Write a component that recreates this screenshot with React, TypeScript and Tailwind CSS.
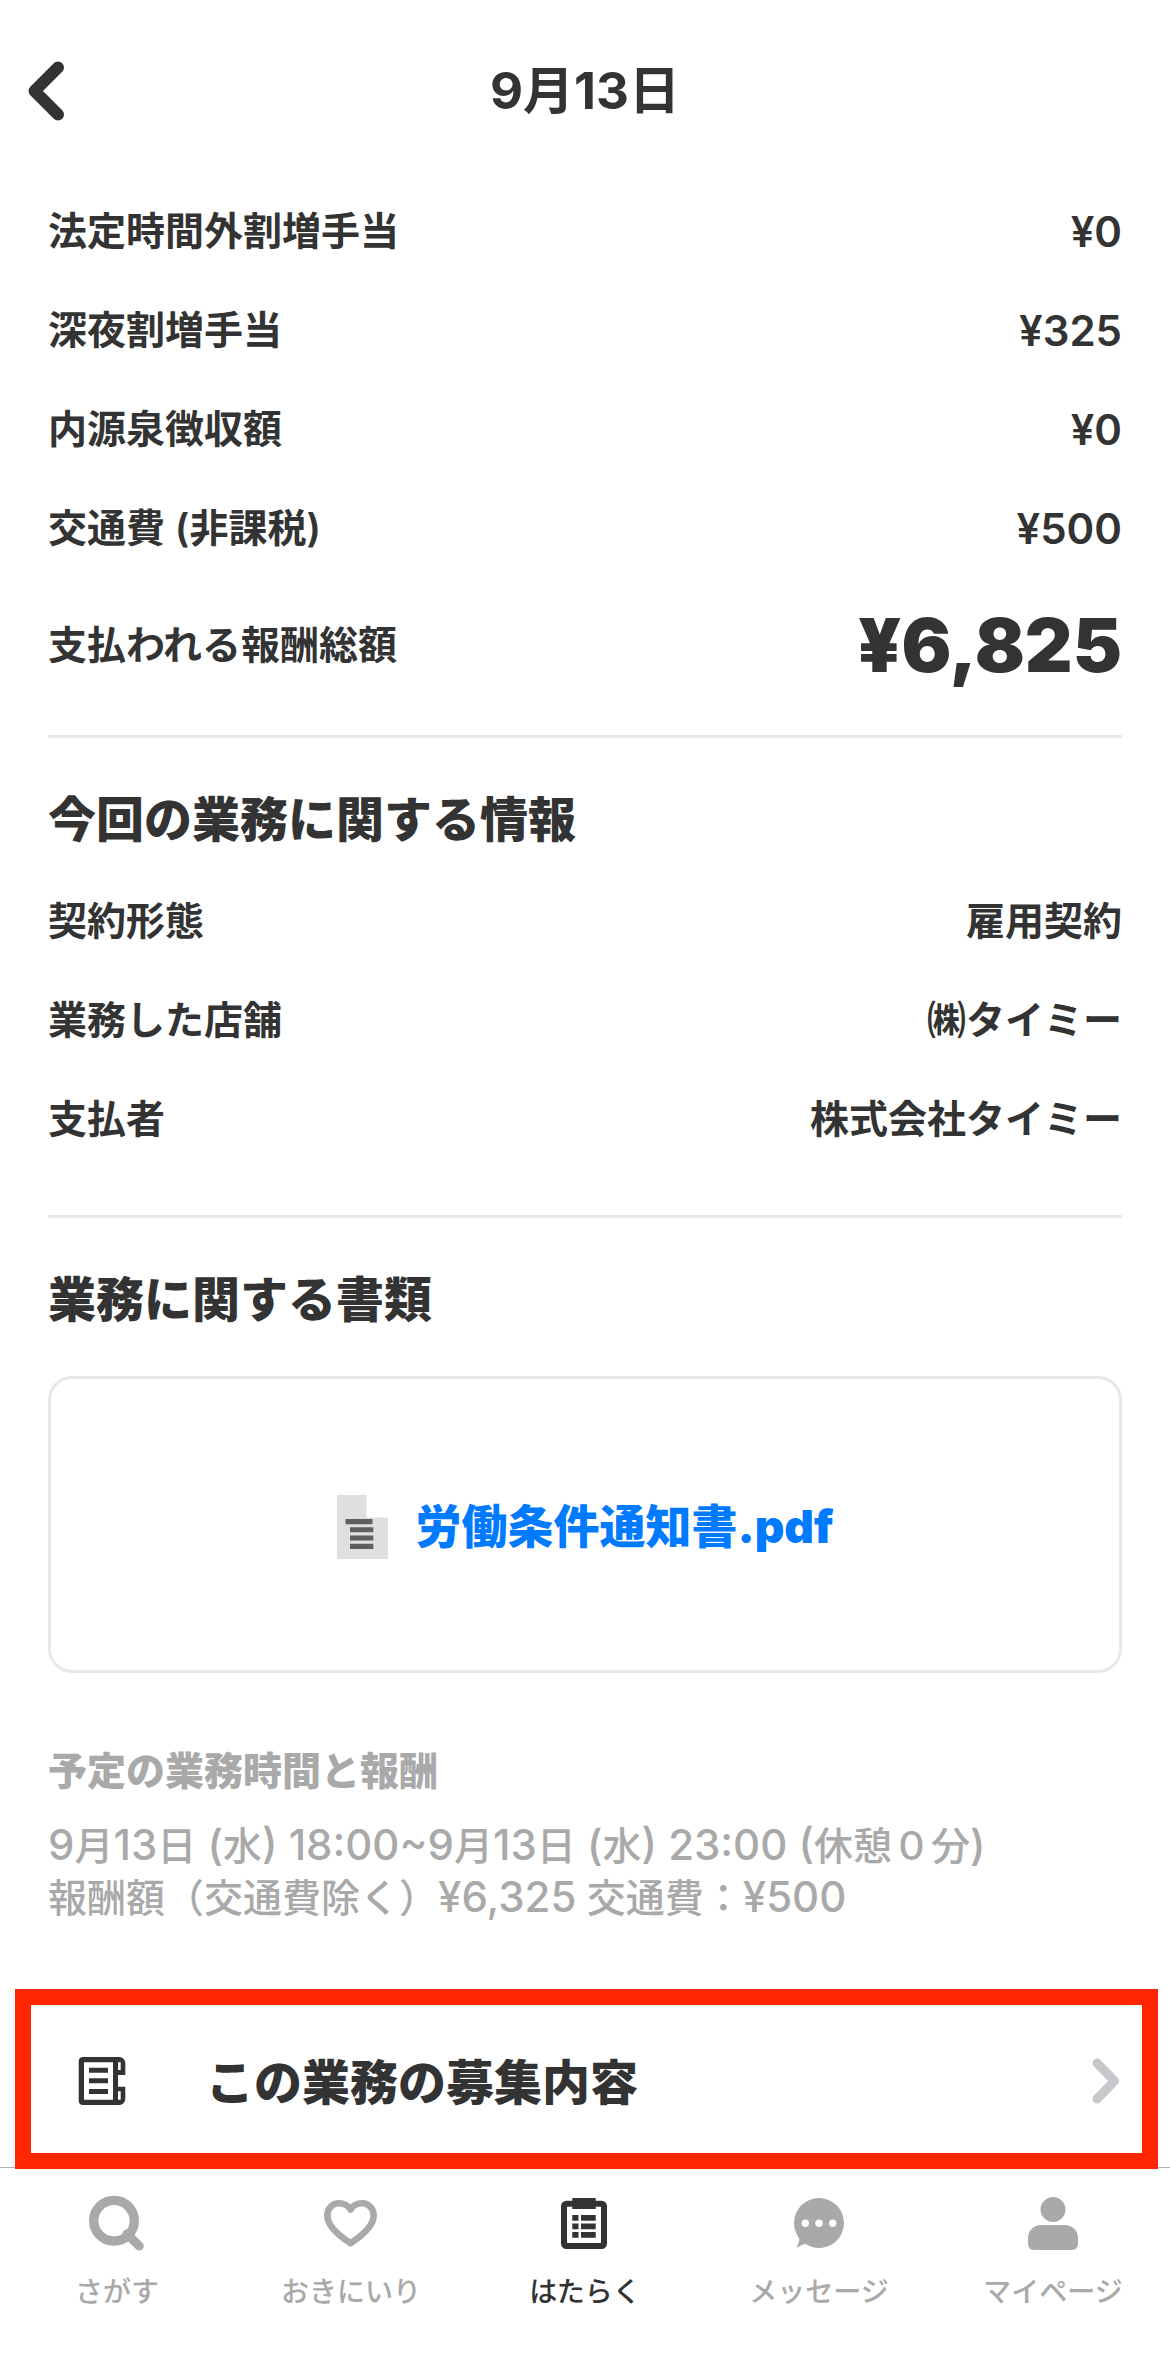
import React from 'react';

interface RowItem {
  label: string;
  value: string;
}

interface TabItem {
  id: string;
  label: string;
  icon: React.ReactNode;
  active?: boolean;
}

const payRows: RowItem[] = [
  { label: '法定時間外割増手当', value: '¥0' },
  { label: '深夜割増手当', value: '¥325' },
  { label: '内源泉徴収額', value: '¥0' },
  { label: '交通費 (非課税)', value: '¥500' },
];

const jobRows: RowItem[] = [
  { label: '契約形態', value: '雇用契約' },
  { label: '業務した店舗', value: '㈱タイミー' },
  { label: '支払者', value: '株式会社タイミー' },
];

const SearchIcon = () => (
  <svg viewBox="0 0 60 60" className="size-15" fill="none" stroke="currentColor" aria-hidden="true">
    <circle cx="27" cy="26.7" r="20.3" strokeWidth="9.4" />
    <path d="M40 40L52.3 52" strokeWidth="9" strokeLinecap="round" />
  </svg>
);

const HeartIcon = () => (
  <svg viewBox="0 0 60 60" className="size-15" fill="none" stroke="currentColor" aria-hidden="true">
    <path
      d="M29.5 49.2C20 43 6.3 33 6.3 21.5C6.3 14.5 11.5 9.3 18 9.3C23 9.3 27 11.5 29.5 15.5C32 11.5 36 9.3 41 9.3C47.5 9.3 52.7 14.5 52.7 21.5C52.7 33 39 43 29.5 49.2Z"
      strokeWidth="6.6"
      strokeLinejoin="round"
    />
  </svg>
);

const ClipboardIcon = () => (
  <svg viewBox="0 0 60 60" className="size-15" fill="currentColor" aria-hidden="true">
    <rect x="9" y="9.7" width="40" height="42.3" rx="2.5" fill="none" stroke="currentColor" strokeWidth="6" />
    <rect x="17.3" y="4" width="23.4" height="11" />
    <path d="M17.3 21h6.2v5.7h-6.2zM26 21h14.7v5.7H26zM17.3 29.5h6.2v5.7h-6.2zM26 29.5h14.7v5.7H26zM17.3 38h6.2v5.7h-6.2zM26 38h14.7v5.7H26z" />
  </svg>
);

const MessageIcon = () => (
  <svg viewBox="0 0 60 60" className="size-15" fill="currentColor" aria-hidden="true">
    <circle cx="30" cy="29" r="25" />
    <path d="M9 41C11.5 45.5 10 49 7.3 53.5L19 48.5Z" />
    <g fill="#fff">
      <circle cx="16.3" cy="29.2" r="3.7" />
      <circle cx="30" cy="29.2" r="3.7" />
      <circle cx="43.7" cy="29.2" r="3.7" />
    </g>
  </svg>
);

const PersonIcon = () => (
  <svg viewBox="0 0 60 60" className="size-15" fill="currentColor" aria-hidden="true">
    <circle cx="30" cy="15.5" r="12.5" />
    <path d="M18 31H42A13 13 0 0 1 55 44V50A6 6 0 0 1 49 56H11A6 6 0 0 1 5 50V44A13 13 0 0 1 18 31Z" />
  </svg>
);

const ReceiptIcon = () => (
  <svg viewBox="0 0 48 48" className="size-12" fill="currentColor" fillRule="evenodd" aria-hidden="true">
    <path d="M5 0H41A6 6 0 0 1 47.3 6V18H40V29.7H47.3V42A6 6 0 0 1 41 48H5A4.5 4.5 0 0 1 .7 43.5V4.5A4.5 4.5 0 0 1 5 0ZM6 5.3V42.7H35V5.3ZM40 5.3V13H42.7V5.3ZM40 34.3V42.7H42.7V34.3Z" />
    <path d="M11 10.7h19v5H11zM11 21.2h19v5H11zM11 32h19v5H11z" />
  </svg>
);

const FileIcon = () => (
  <svg viewBox="0 0 51 64" className="h-16 w-[51px]" aria-hidden="true">
    <path d="M1.5 0H29.5V22.5H49.5A1.5 1.5 0 0 1 51 24V62.5A1.5 1.5 0 0 1 49.5 64H1.5A1.5 1.5 0 0 1 0 62.5V1.5A1.5 1.5 0 0 1 1.5 0Z" fill="#dfdfdf" />
    <path d="M8.5 24h27v5.2h-27zM13 32.2h23.3v5H13zM13 40.5h23.3v5H13zM13 48.8h23.3v5.2H13z" fill="#5f5f5f" />
  </svg>
);

const tabs: TabItem[] = [
  { id: 'search', label: 'さがす', icon: <SearchIcon /> },
  { id: 'favorite', label: 'おきにいり', icon: <HeartIcon /> },
  { id: 'work', label: 'はたらく', icon: <ClipboardIcon />, active: true },
  { id: 'message', label: 'メッセージ', icon: <MessageIcon /> },
  { id: 'mypage', label: 'マイページ', icon: <PersonIcon /> },
];

// Latin digits run small next to kanji, so they are set one step larger
const Num: React.FC<{ children: React.ReactNode }> = ({ children }) => (
  <span className="text-[42px]">{children}</span>
);

const Row: React.FC<RowItem> = ({ label, value }) => (
  <div className="flex h-[99px] items-center justify-between text-[39px] font-semibold">
    <dt>{label}</dt>
    <dd>{value.startsWith('¥') ? <Num>{value}</Num> : value}</dd>
  </div>
);

const App: React.FC = () => {
  return (
    <div
      lang="ja"
      className="flex min-h-screen flex-col bg-white font-['Inter','Noto_Sans_CJK_JP',sans-serif] text-[#333]"
    >
      {/* Header */}
      <header className="grid h-[182px] grid-cols-[1fr_auto_1fr] items-center">
        <button type="button" aria-label="戻る" className="ml-7 justify-self-start">
          <svg viewBox="0 0 36 60" className="h-15 w-9" fill="none" stroke="currentColor" aria-hidden="true">
            <path d="M30 6.5L6.5 30L30 53.5" strokeWidth="12" strokeLinecap="round" strokeLinejoin="round" />
          </svg>
        </button>
        <h1 className="text-[51px] font-bold">9月13日</h1>
      </header>

      <main className="flex-1">
        <div className="px-12">
          {/* Payment */}
          <section className="border-b-3 border-[#e8e8e8] pb-[22px]">
            <dl>
              {payRows.map((row) => (
                <Row key={row.label} {...row} />
              ))}
              <div className="flex h-[135px] items-center justify-between text-[39px] font-semibold">
                <dt>支払われる報酬総額</dt>
                <dd className="text-[74px] font-black">¥6,825</dd>
              </div>
            </dl>
          </section>

          {/* Job info */}
          <section className="border-b-3 border-[#e8e8e8] py-[46px]">
            <h2 className="pb-4 text-[48px] leading-[72px] font-black">今回の業務に関する情報</h2>
            <dl>
              {jobRows.map((row) => (
                <Row key={row.label} {...row} />
              ))}
            </dl>
          </section>

          {/* Documents */}
          <section className="pt-[46px]">
            <h2 className="text-[48px] leading-[72px] font-black">業務に関する書類</h2>
            <a
              href="#document"
              className="mt-10 flex h-[297px] items-center justify-center gap-7 rounded-3xl border-3 border-[#e8e8e8] pt-1"
            >
              <FileIcon />
              <span className="text-[46px] font-black text-[#007aff]">労働条件通知書.pdf</span>
            </a>
          </section>

          {/* Schedule */}
          <section className="mt-[68px] text-[39px] text-[#a9a9a9]">
            <h3 className="leading-[60px] font-black">予定の業務時間と報酬</h3>
            <p className="mt-[18px] leading-[51px] font-medium">
              <Num>9</Num>月<Num>13</Num>日<Num> (</Num>水<Num>) 18:00~9</Num>月<Num>13</Num>日<Num> (</Num>水
              <Num>) 23:00 (</Num>休憩０分<Num>)</Num>
              <br />
              報酬額（交通費除く）<Num>¥6,325</Num> 交通費：<Num>¥500</Num>
            </p>
          </section>
        </div>

        {/* Link to the job post, its frame laps over the tab bar line */}
        <a
          href="#offer"
          className="relative z-10 mt-[66px] mr-3 -mb-[3px] ml-[15px] flex h-[180px] items-center border-16 border-[#ff2600] bg-white pt-1 pr-[22px] pl-[47px]"
        >
          <ReceiptIcon />
          <span className="ml-20 flex-1 pt-1 text-[48px] font-black">この業務の募集内容</span>
          <svg viewBox="0 0 28 48" className="h-12 w-7" fill="none" stroke="#c7c7cc" aria-hidden="true">
            <path d="M5 6L22.5 24L5 42" strokeWidth="9" strokeLinecap="round" strokeLinejoin="round" />
          </svg>
        </a>
      </main>

      {/* Tab bar */}
      <nav className="grid grid-cols-5 border-t border-[#b2b2b2] bg-white pt-[26px] pb-11">
        {tabs.map((tab) => (
          <a
            key={tab.id}
            href={`#${tab.id}`}
            className={`flex flex-col items-center gap-[18px] ${tab.active ? 'text-[#333]' : 'text-[#a9a9a9]'}`}
          >
            {tab.icon}
            <span className="text-[28px] leading-10 font-medium">{tab.label}</span>
          </a>
        ))}
      </nav>
    </div>
  );
};

export default App;
